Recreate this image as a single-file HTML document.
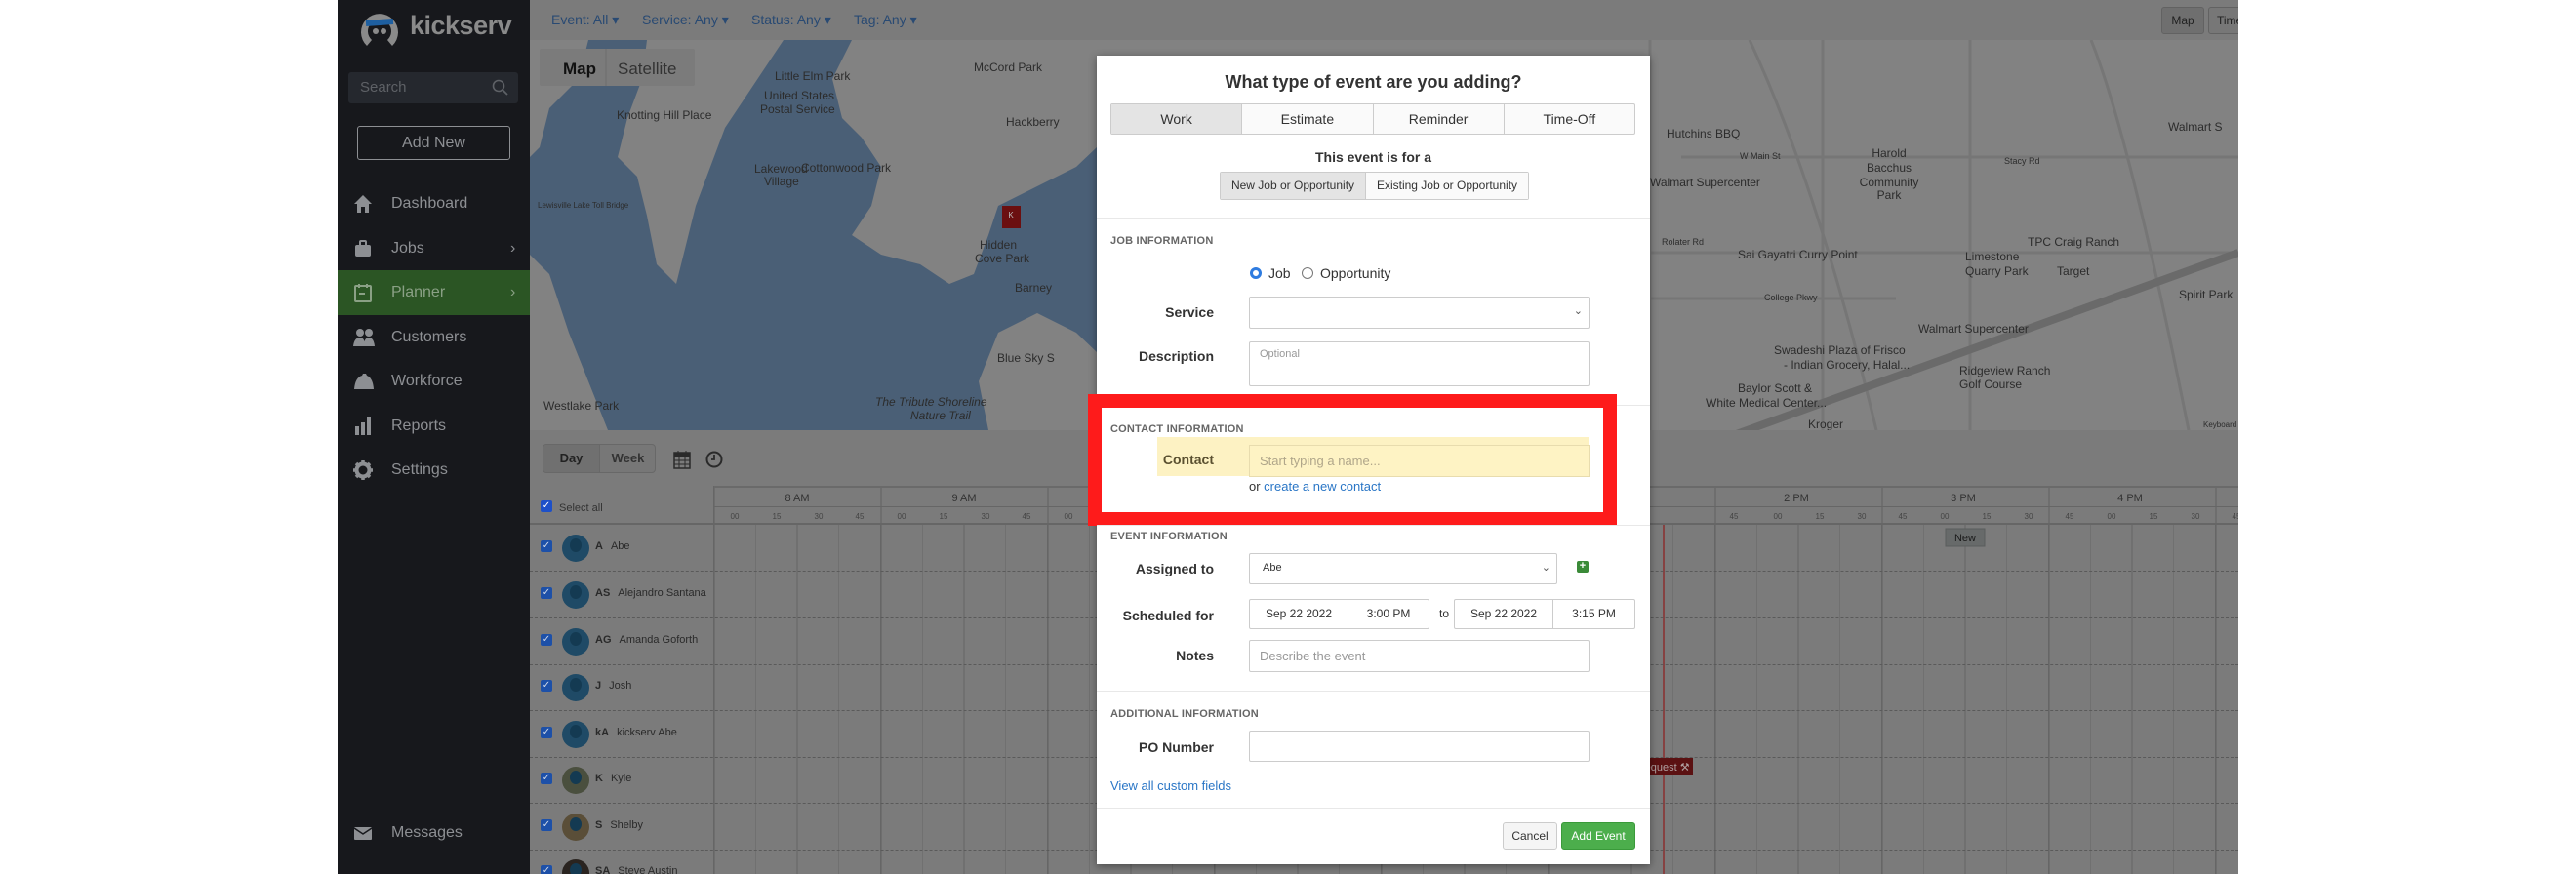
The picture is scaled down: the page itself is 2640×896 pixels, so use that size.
<!DOCTYPE html>
<html><head><meta charset="utf-8">
<style>
*{box-sizing:border-box;margin:0;padding:0}
body{width:2640px;height:896px;overflow:hidden;background:#fff;font-family:"Liberation Sans",sans-serif;position:relative}
.a{position:absolute}
#side{left:346px;top:0;width:197px;height:896px;background:#17181c}
.mi{position:absolute;left:0;width:197px;height:46px;color:#8d8f93;font-size:16px;line-height:46px;padding-left:55px}
.mi svg{position:absolute;left:16px;top:13px}
#app{left:543px;top:0;width:1751px;height:896px;background:#7b7b7b;overflow:hidden}
.flt{top:12px;font-size:14px;color:#294a73}
.lbl{font-size:14px;font-weight:bold;color:#333;text-align:right;width:120px}
.inp{background:#fff;border:1px solid #ccc;border-radius:2px}
.sec{font-size:11px;font-weight:bold;color:#666;letter-spacing:.2px}
.row{position:absolute;left:0;width:1751px;height:48px;border-bottom:1px dashed #5a5a5a}
.av{position:absolute;left:33px;top:10px;width:28px;height:28px;border-radius:50%;background:#1f4a66;overflow:hidden}
.av:after{content:"";position:absolute;left:8px;top:4px;width:12px;height:14px;border-radius:50%;background:#143a52}
.cb{position:absolute;left:11px;top:16px;width:12px;height:12px;background:#1d50a8;border-radius:2px;color:#cfd8e8;font-size:10px;line-height:12px;text-align:center}
.nm{position:absolute;left:67px;top:16px;font-size:11px;color:#2a2a2a}
.nm b{margin-right:8px}
</style></head><body>

<div id="side" class="a">
  <svg class="a" style="left:21px;top:9px" width="44" height="42" viewBox="0 0 44 42">
    <path d="M9 38 A19 19 0 1 1 35 38 L30 32 A12 12 0 1 0 14 32 Z" fill="#8a8a8a"/>
    <rect x="8" y="11" width="28" height="6" fill="#1e5fa0" transform="rotate(-4 22 14)"/>
    <circle cx="18" cy="23" r="3" fill="#8a8a8a"/><circle cx="26" cy="23" r="3" fill="#8a8a8a"/>
  </svg>
  <div class="a" style="left:74px;top:11px;font-size:27px;font-weight:bold;color:#8a8a8a;letter-spacing:-0.5px">kickserv</div>
  <div class="a" style="left:11px;top:74px;width:174px;height:32px;background:#25282e;border-radius:3px;color:#5e6166;font-size:15px;line-height:32px;padding-left:12px">Search
    <svg class="a" style="left:147px;top:7px" width="18" height="18" viewBox="0 0 18 18"><circle cx="7" cy="7" r="5.5" stroke="#5e6166" stroke-width="1.6" fill="none"/><path d="M11 11 L16 16" stroke="#5e6166" stroke-width="1.8"/></svg>
  </div>
  <div class="a" style="left:20px;top:129px;width:157px;height:35px;border:1px solid #8d8f93;border-radius:3px;color:#8d8f93;font-size:16px;line-height:33px;text-align:center">Add New</div>
  <div class="mi" style="top:186px"><svg width="20" height="20" viewBox="0 0 20 20"><path d="M10 1 L19 10 H16 V19 H12 V13 H8 V19 H4 V10 H1 Z" fill="#8d8f93"/></svg>Dashboard</div>
  <div class="mi" style="top:232px"><svg width="20" height="20" viewBox="0 0 20 20"><rect x="2" y="6" width="16" height="12" rx="2" fill="#8d8f93"/><rect x="7" y="2" width="6" height="5" rx="1" fill="none" stroke="#8d8f93" stroke-width="2"/></svg>Jobs<span class="a" style="left:177px;top:0">›</span></div>
  <div class="mi" style="top:277px;background:#2b5524;color:#8aa085"><svg width="20" height="20" viewBox="0 0 20 20"><rect x="2" y="3" width="16" height="16" rx="1" fill="none" stroke="#8aa085" stroke-width="2"/><path d="M6 1V5M14 1V5M6 11H12" stroke="#8aa085" stroke-width="2"/></svg>Planner<span class="a" style="left:177px;top:0">›</span></div>
  <div class="mi" style="top:323px"><svg width="22" height="20" viewBox="0 0 22 20"><circle cx="7" cy="5" r="4" fill="#8d8f93"/><circle cx="16" cy="5" r="4" fill="#8d8f93"/><path d="M0 19 Q1 10 7 10 Q12 10 12 19Z M11 19 Q11 10 16 10 Q21 10 22 19Z" fill="#8d8f93"/></svg>Customers</div>
  <div class="mi" style="top:368px"><svg width="22" height="20" viewBox="0 0 22 20"><path d="M1 18 Q2 6 9 4 L10 2 H13 L14 4 Q20 6 21 18Z" fill="#8d8f93"/></svg>Workforce</div>
  <div class="mi" style="top:414px"><svg width="20" height="20" viewBox="0 0 20 20"><rect x="2" y="10" width="4" height="9" fill="#8d8f93"/><rect x="8" y="6" width="4" height="13" fill="#8d8f93"/><rect x="14" y="1" width="4" height="18" fill="#8d8f93"/></svg>Reports</div>
  <div class="mi" style="top:459px"><svg width="20" height="20" viewBox="0 0 20 20"><circle cx="10" cy="10" r="6.5" fill="none" stroke="#8d8f93" stroke-width="4"/><path d="M10 0V4M10 16V20M0 10H4M16 10H20M3 3L6 6M14 14L17 17M17 3L14 6M3 17L6 14" stroke="#8d8f93" stroke-width="3.5"/></svg>Settings</div>
  <div class="mi" style="top:831px"><svg width="20" height="20" viewBox="0 0 20 20"><rect x="1" y="4" width="18" height="13" rx="1" fill="#8d8f93"/><path d="M1 5 L10 11 L19 5" stroke="#17181c" stroke-width="1.5" fill="none"/></svg>Messages</div>
</div>

<div id="app" class="a">
  <div class="a flt" style="left:22px">Event: All ▾</div>
  <div class="a flt" style="left:115px">Service: Any ▾</div>
  <div class="a flt" style="left:227px">Status: Any ▾</div>
  <div class="a flt" style="left:332px">Tag: Any ▾</div>
  <div class="a" style="left:1672px;top:7px;width:44px;height:28px;background:#6f6f6f;border:1px solid #626262;border-radius:3px;font-size:12px;line-height:26px;text-align:center;color:#222">Map</div>
  <div class="a" style="left:1720px;top:7px;width:44px;height:28px;background:#777;border:1px solid #626262;border-radius:3px;font-size:12px;line-height:26px;padding-left:8px;color:#222">Time</div>

  <svg class="a" style="left:0;top:41px" width="1751" height="400" viewBox="0 0 1751 400">
    <rect width="1751" height="400" fill="#828282"/>
    <rect width="581" height="400" fill="#4a5f76"/>
    <path d="M0 0 H60 L50 40 L20 70 L10 110 L0 120Z" fill="#828282"/>
    <path d="M120 0 H260 L240 30 L220 60 L200 90 L185 130 L170 170 L160 210 L150 250 L130 230 L120 180 L110 140 L90 120 L100 80 L115 40Z" fill="#828282"/>
    <path d="M330 0 H581 V110 L560 130 L520 150 L480 170 L470 200 L455 240 L430 250 L400 230 L360 220 L330 200 L350 170 L360 130 L340 100 L320 80 L310 40Z" fill="#828282"/>
    <path d="M0 220 L20 240 L40 300 L60 350 L80 400 H0Z" fill="#828282"/>
    <path d="M480 300 L520 280 L560 300 L581 320 V400 H470 L460 350Z" fill="#828282"/>
    <g stroke="#767676" stroke-width="3" fill="none">
      <path d="M1148 0 V400 M1325 0 V400 M1476 0 V400 M1180 120 H1751 M1148 218 H1751 M1148 265 H1400 M1250 0 Q1320 150 1380 400 M1600 0 Q1640 100 1700 400"/>
    </g>
    <path d="M1220 410 L1751 218" stroke="#6a6a6a" stroke-width="8"/>
    <g font-size="12" fill="#2c2c2c" font-family="Liberation Sans">
      <text x="1165" y="100">Hutchins BBQ</text><text x="1240" y="122" font-size="9">W Main St</text>
      <text x="1148" y="150">Walmart Supercenter</text><text x="1393" y="120" text-anchor="middle">Harold</text><text x="1393" y="135" text-anchor="middle">Bacchus</text><text x="1393" y="150" text-anchor="middle">Community</text><text x="1393" y="163" text-anchor="middle">Park</text>
      <text x="1511" y="127" font-size="9">Stacy Rd</text><text x="1535" y="211">TPC Craig Ranch</text>
      <text x="1160" y="210" font-size="9">Rolater Rd</text><text x="1238" y="224">Sai Gayatri Curry Point</text>
      <text x="1471" y="226">Limestone</text><text x="1471" y="241">Quarry Park</text><text x="1565" y="241">Target</text>
      <text x="1265" y="267" font-size="9">College Pkwy</text><text x="1423" y="300">Walmart Supercenter</text>
      <text x="1275" y="322">Swadeshi Plaza of Frisco</text><text x="1285" y="337">- Indian Grocery, Halal...</text>
      <text x="1465" y="343">Ridgeview Ranch</text><text x="1465" y="357">Golf Course</text>
      <text x="1238" y="361">Baylor Scott &amp;</text><text x="1205" y="376">White Medical Center...</text>
      <text x="1310" y="398">Kroger</text>
      <text x="1679" y="93">Walmart S</text><text x="1690" y="265">Spirit Park</text>
      <text x="1715" y="397" font-size="8">Keyboard shortcuts   Map data ©2022 Goog</text>
      <text x="89" y="81">Knotting Hill Place</text><text x="251" y="41">Little Elm Park</text>
      <text x="240" y="61">United States</text><text x="236" y="75">Postal Service</text>
      <text x="455" y="32">McCord Park</text><text x="488" y="88">Hackberry</text>
      <text x="230" y="136">Lakewood</text><text x="240" y="149">Village</text><text x="278" y="135">Cottonwood Park</text>
      <text x="8" y="172" font-size="8">Lewisville Lake Toll Bridge</text>
      <text x="461" y="214">Hidden</text><text x="456" y="228">Cove Park</text><text x="497" y="258">Barney</text>
      <text x="479" y="330">Blue Sky S</text><text x="14" y="379">Westlake Park</text>
      <text x="354" y="375" font-style="italic">The Tribute Shoreline</text><text x="390" y="389" font-style="italic">Nature Trail</text>
    </g>
    <rect x="484" y="170" width="19" height="23" fill="#6b0f10"/>
    <text x="493" y="182" font-size="8" fill="#bbb" text-anchor="middle">K</text>
    <rect x="10" y="9" width="159" height="38" fill="#7b7b7b" rx="2"/>
    <line x1="78" y1="9" x2="78" y2="47" stroke="#6e6e6e"/>
    <text x="34" y="35" font-size="17" font-weight="bold" fill="#111">Map</text>
    <text x="90" y="35" font-size="17" fill="#333">Satellite</text>
  </svg>

  <div class="a" style="left:13px;top:455px;width:116px;height:30px;border:1px solid #686868;border-radius:4px;background:#777;overflow:hidden">
    <div class="a" style="left:0;top:0;width:57px;height:28px;background:#707070;font-size:13px;font-weight:bold;line-height:28px;text-align:center;color:#222">Day</div>
    <div class="a" style="left:57px;top:0;width:58px;height:28px;border-left:1px solid #686868;font-size:13px;font-weight:bold;line-height:28px;text-align:center;color:#333">Week</div>
  </div>
  <svg class="a" style="left:147px;top:461px" width="18" height="20" viewBox="0 0 18 20"><rect x="1" y="3" width="16" height="16" fill="none" stroke="#2a2a2a" stroke-width="1.5"/><rect x="1" y="3" width="16" height="4" fill="#2a2a2a"/><path d="M5 1V5M13 1V5M1 11H17M1 15H17M6 7V19M12 7V19" stroke="#2a2a2a"/></svg>
  <svg class="a" style="left:180px;top:462px" width="18" height="18" viewBox="0 0 18 18"><circle cx="9" cy="9" r="7.5" fill="none" stroke="#2a2a2a" stroke-width="2"/><path d="M9 4V9H6" stroke="#2a2a2a" stroke-width="1.8" fill="none"/></svg>

  <div class="a" style="left:0;top:498px;width:1751px;height:400px;border-top:2px solid #6a6a6a;
    background-image:repeating-linear-gradient(90deg,transparent 0,transparent 42px,#666 42px,#666 42.75px);background-position:189px 0"></div>
  <div class="a" style="left:0;top:498px;width:189px;height:400px;background:#7b7b7b;border-right:1px solid #666"></div>
  <div class="a" style="left:189px;top:500px;width:1562px;height:38px;background:#7b7b7b;border-bottom:2px solid #666"></div>
  <div class="a" style="left:189px;top:519px;width:1562px;height:1px;background:#666"></div>
  <div class="a" style="left:0;top:536px;width:189px;height:2px;background:#666"></div>
  <div class="a" style="left:11px;top:513px;width:12px;height:12px;background:#1d50c8;border-radius:2px;color:#fff;font-size:10px;line-height:12px;text-align:center">✓</div>
  <div class="a" style="left:30px;top:515px;font-size:11px;color:#333">Select all</div>
  <svg class="a" style="left:189px;top:500px" width="1562" height="396" font-family="Liberation Sans">
    <g stroke="#666" stroke-width="1.2">
      <line x1="0" y1="0" x2="0" y2="396"/><line x1="171" y1="0" x2="171" y2="396"/><line x1="342" y1="0" x2="342" y2="396"/><line x1="513" y1="0" x2="513" y2="396"/><line x1="684" y1="0" x2="684" y2="396"/><line x1="855" y1="0" x2="855" y2="396"/><line x1="1026" y1="0" x2="1026" y2="396"/><line x1="1197" y1="0" x2="1197" y2="396"/><line x1="1368" y1="0" x2="1368" y2="396"/><line x1="1539" y1="0" x2="1539" y2="396"/>
    </g>
    <g font-size="11" fill="#333" text-anchor="middle">
      <text x="85" y="14">8 AM</text><text x="256" y="14">9 AM</text><text x="1109" y="14">2 PM</text><text x="1280" y="14">3 PM</text><text x="1451" y="14">4 PM</text>
    </g>
    <g font-size="8" fill="#444" text-anchor="middle">
      <text x="21" y="32">00</text><text x="64" y="32">15</text><text x="107" y="32">30</text><text x="149" y="32">45</text>
      <text x="192" y="32">00</text><text x="235" y="32">15</text><text x="278" y="32">30</text><text x="320" y="32">45</text><text x="363" y="32">00</text>
      <text x="1045" y="32">45</text><text x="1090" y="32">00</text><text x="1133" y="32">15</text><text x="1176" y="32">30</text><text x="1218" y="32">45</text>
      <text x="1261" y="32">00</text><text x="1304" y="32">15</text><text x="1347" y="32">30</text><text x="1389" y="32">45</text>
      <text x="1432" y="32">00</text><text x="1475" y="32">15</text><text x="1518" y="32">30</text><text x="1560" y="32">45</text>
    </g>
    <line x1="973" y1="38" x2="973" y2="396" stroke="#8a3030" stroke-width="1.5"/>
    <rect x="1262" y="42" width="40" height="18" fill="#676a6a" stroke="#5a5c5c"/>
    <text x="1282" y="55" font-size="11" fill="#1a1a1a" text-anchor="middle">New</text>
    <rect x="945" y="277" width="58" height="18" fill="#5b1112"/>
    <text x="950" y="290" font-size="11" fill="#b0a0a0">request ⚒</text>
  </svg>
  <div class="row" style="top:538px"><div class="cb">✓</div><div class="av"></div><div class="nm"><b>A</b>Abe</div></div>
  <div class="row" style="top:586px"><div class="cb">✓</div><div class="av"></div><div class="nm"><b>AS</b>Alejandro Santana</div></div>
  <div class="row" style="top:634px"><div class="cb">✓</div><div class="av"></div><div class="nm"><b>AG</b>Amanda Goforth</div></div>
  <div class="row" style="top:681px"><div class="cb">✓</div><div class="av"></div><div class="nm"><b>J</b>Josh</div></div>
  <div class="row" style="top:729px"><div class="cb">✓</div><div class="av"></div><div class="nm"><b>kA</b>kickserv Abe</div></div>
  <div class="row" style="top:776px"><div class="cb">✓</div><div class="av" style="background:#4a4f3e"></div><div class="nm"><b>K</b>Kyle</div></div>
  <div class="row" style="top:824px"><div class="cb">✓</div><div class="av" style="background:#5a4e38"></div><div class="nm"><b>S</b>Shelby</div></div>
  <div class="row" style="top:871px"><div class="cb">✓</div><div class="av" style="background:#2a2420"></div><div class="nm"><b>SA</b>Steve Austin</div></div>
</div>

<div class="a" style="left:1124px;top:57px;width:567px;height:829px;background:#fff;box-shadow:0 2px 8px rgba(0,0,0,.4)">
  <div class="a" style="left:0;top:17px;width:567px;text-align:center;font-size:18px;font-weight:bold;color:#333">What type of event are you adding?</div>
  <div class="a" style="left:14px;top:49px;width:538px;height:32px;border:1px solid #ccc;border-radius:2px;display:flex;font-size:14px;color:#333;background:#fafafa">
    <div style="flex:1;text-align:center;line-height:30px;background:#e4e4e4;border-right:1px solid #ccc">Work</div>
    <div style="flex:1;text-align:center;line-height:30px;border-right:1px solid #ccc">Estimate</div>
    <div style="flex:1;text-align:center;line-height:30px;border-right:1px solid #ccc">Reminder</div>
    <div style="flex:1;text-align:center;line-height:30px">Time-Off</div>
  </div>
  <div class="a" style="left:0;top:96px;width:567px;text-align:center;font-size:14px;font-weight:bold;color:#333">This event is for a</div>
  <div class="a" style="left:126px;top:119px;width:317px;height:29px;border:1px solid #ccc;border-radius:2px;display:flex;font-size:12px;color:#333">
    <div style="width:149px;text-align:center;line-height:27px;background:#e4e4e4;border-right:1px solid #ccc">New Job or Opportunity</div>
    <div style="flex:1;text-align:center;line-height:27px;background:#fafafa">Existing Job or Opportunity</div>
  </div>
  <div class="a" style="left:0;top:166px;width:567px;height:1px;background:#e8e8e8"></div>
  <div class="a sec" style="left:14px;top:184px">JOB INFORMATION</div>
  <div class="a" style="left:157px;top:217px;width:12px;height:12px;border-radius:50%;border:3.5px solid #2f7ce0;background:#fff"></div>
  <div class="a" style="left:176px;top:215px;font-size:14px;color:#333">Job</div>
  <div class="a" style="left:210px;top:217px;width:12px;height:12px;border-radius:50%;border:1px solid #777;background:#fff"></div>
  <div class="a" style="left:229px;top:215px;font-size:14px;color:#333">Opportunity</div>
  <div class="a lbl" style="left:0;top:255px">Service</div>
  <div class="a inp" style="left:156px;top:247px;width:349px;height:33px"><span class="a" style="right:6px;top:7px;font-size:11px;color:#555">⌄</span></div>
  <div class="a lbl" style="left:0;top:300px">Description</div>
  <div class="a inp" style="left:156px;top:293px;width:349px;height:46px;font-size:11px;color:#999;padding:6px 10px">Optional</div>
  <div class="a" style="left:0;top:358px;width:567px;height:1px;background:#e8e8e8"></div>

  <div class="a" style="left:-9px;top:347px;width:542px;height:135px;border:14px solid #fe1b1b"></div>
  <div class="a sec" style="left:14px;top:377px">CONTACT INFORMATION</div>
  <div class="a" style="left:62px;top:391px;width:442px;height:40px;background:#fdf2c3"></div>
  <div class="a lbl" style="left:0;top:406px;color:#5a5030">Contact</div>
  <div class="a" style="left:156px;top:399px;width:349px;height:33px;background:#fef3c4;border:1px solid #e8dcae;font-size:13px;color:#b0a68a;line-height:31px;padding-left:10px">Start typing a name...</div>
  <div class="a" style="left:156px;top:434px;font-size:13px;color:#333">or <span style="color:#2a76c6">create a new contact</span></div>
  <div class="a" style="left:0;top:481px;width:567px;height:1px;background:#e8e8e8"></div>

  <div class="a sec" style="left:14px;top:487px">EVENT INFORMATION</div>
  <div class="a lbl" style="left:0;top:518px">Assigned to</div>
  <div class="a inp" style="left:156px;top:510px;width:316px;height:32px;font-size:11px;color:#333;line-height:28px;padding-left:13px">Abe<span class="a" style="right:6px;top:0;font-size:11px;color:#555">⌄</span></div>
  <div class="a" style="left:492px;top:518px;width:12px;height:12px;background:#3a8a38;border-radius:2px;color:#fff;font-size:11px;line-height:11px;text-align:center;font-weight:bold">+</div>
  <div class="a lbl" style="left:0;top:566px">Scheduled for</div>
  <div class="a inp" style="left:156px;top:557px;width:185px;height:31px;display:flex;font-size:12px;color:#333;line-height:29px">
    <div style="width:101px;text-align:center;border-right:1px solid #ccc">Sep 22 2022</div><div style="flex:1;text-align:center">3:00 PM</div></div>
  <div class="a" style="left:351px;top:565px;font-size:12px;color:#333">to</div>
  <div class="a inp" style="left:366px;top:557px;width:186px;height:31px;display:flex;font-size:12px;color:#333;line-height:29px">
    <div style="width:101px;text-align:center;border-right:1px solid #ccc">Sep 22 2022</div><div style="flex:1;text-align:center">3:15 PM</div></div>
  <div class="a lbl" style="left:0;top:607px">Notes</div>
  <div class="a inp" style="left:156px;top:599px;width:349px;height:33px;font-size:13px;color:#999;line-height:31px;padding-left:10px">Describe the event</div>
  <div class="a" style="left:0;top:651px;width:567px;height:1px;background:#e8e8e8"></div>

  <div class="a sec" style="left:14px;top:669px">ADDITIONAL INFORMATION</div>
  <div class="a lbl" style="left:0;top:701px">PO Number</div>
  <div class="a inp" style="left:156px;top:692px;width:349px;height:32px"></div>
  <div class="a" style="left:14px;top:741px;font-size:13px;color:#2a76c6">View all custom fields</div>
  <div class="a" style="left:0;top:771px;width:567px;height:1px;background:#e8e8e8"></div>
  <div class="a" style="left:416px;top:786px;width:56px;height:28px;border:1px solid #ccc;border-radius:3px;background:#f5f5f5;font-size:12px;line-height:26px;text-align:center;color:#333">Cancel</div>
  <div class="a" style="left:476px;top:786px;width:76px;height:28px;border:1px solid #3a9a3a;border-radius:3px;background:#4cae4c;font-size:12px;line-height:26px;text-align:center;color:#fff">Add Event</div>
</div>
</body></html>
